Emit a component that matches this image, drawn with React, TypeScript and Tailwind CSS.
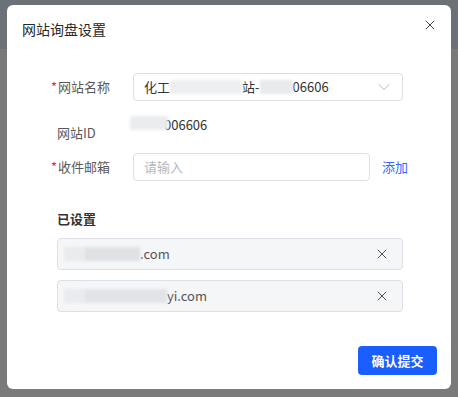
import { ChevronDown, X } from "lucide-react";

const font = { fontFamily: '"Noto Sans CJK SC", "Noto Sans", sans-serif' };

function Blur({ w, tone = "bg-[#e6e8eb]" }: { w: string; tone?: string }) {
  return <span className={`inline-block h-[14px] ${w} ${tone} blur-[1.5px]`} />;
}

function Label({ text, required }: { text: string; required?: boolean }) {
  return (
    <div className="w-[76px] shrink-0 text-[13px] text-[#595959]">
      {required && <span className="-ml-[6px] mr-px text-[#f5222d]">*</span>}
      {text}
    </div>
  );
}

function App() {
  return (
    <div style={font} className="relative h-[397px] w-[458px] overflow-hidden bg-[#7a7a7a]">
      <div className="h-[49px] bg-[#6c7178]" />
      <div className="absolute left-[7px] top-[5px] flex h-[384px] w-[444px] flex-col rounded-[6px] bg-white">
        {/* header */}
        <div className="flex h-[44px] items-center justify-between pl-[15px] pr-[13px] pt-[4px]">
          <span className="text-[14px] text-[#262626]">网站询盘设置</span>
          <X size={16} strokeWidth={1.4} className="-mt-[8px] text-[#333]" />
        </div>

        <div className="flex flex-col pl-[50px] pr-[48px] pt-[24px]">
          {/* 网站名称 */}
          <div className="flex items-center">
            <Label text="网站名称" required />
            <div className="flex h-[28px] flex-1 items-center justify-between rounded-[4px] border border-[#dcdfe6] pl-[10px] pr-[8px] text-[13px] text-[#333]">
              <span className="flex items-center">
                化工
                <Blur w="w-[72px]" tone="bg-[#eceef0]" />
                站-
                <Blur w="w-[33px]" tone="bg-[#e9eaed]" />
                06606
              </span>
              <ChevronDown size={20} strokeWidth={1} className="text-[#a8abb2]" />
            </div>
          </div>

          {/* 网站ID */}
          <div className="mt-[14px] flex items-start">
            <div className="pt-[8px]">
              <Label text="网站ID" />
            </div>
            <div className="flex items-center text-[13px] text-[#333]">
              <span className="relative z-10 -ml-[3px]">
                <Blur w="w-[38px]" tone="bg-[#ebecee]" />
              </span>
              <span className="-ml-[4px]">006606</span>
            </div>
          </div>

          {/* 收件邮箱 */}
          <div className="mt-[10px] flex items-center whitespace-nowrap">
            <Label text="收件邮箱" required />
            <div className="flex h-[28px] w-[237px] shrink-0 items-center rounded-[4px] border border-[#dcdfe6] pl-[10px] text-[13px] text-[#b4b7bd]">
              请输入
            </div>
            <span className="ml-[12px] shrink-0 text-[13px] text-[#2f6bff]">添加</span>
          </div>

          {/* 已设置 */}
          <div className="mt-[28px] text-[13px] font-bold text-[#333]">已设置</div>
          <div className="mt-[10px] flex flex-col gap-[10px]">
            <div className="flex h-[32px] items-center justify-between rounded-[4px] border border-[#dcdfe6] bg-[#f5f6f8] pl-[6px] pr-[12px] text-[13px] text-[#555]">
              <span className="flex items-center">
                <Blur w="w-[20px]" tone="bg-[#eaebee]" />
                <Blur w="w-[56px]" tone="bg-[#dfe1e5]" />
                .com
              </span>
              <X size={16} strokeWidth={1.4} className="text-[#444]" />
            </div>
            <div className="flex h-[32px] items-center justify-between rounded-[4px] border border-[#dcdfe6] bg-[#f5f6f8] pl-[6px] pr-[12px] text-[13px] text-[#555]">
              <span className="flex items-center">
                <Blur w="w-[20px]" tone="bg-[#eaebee]" />
                <Blur w="w-[83px]" tone="bg-[#e1e3e6]" />
                yi.com
              </span>
              <X size={16} strokeWidth={1.4} className="text-[#444]" />
            </div>
          </div>
        </div>

        {/* footer */}
        <div className="mt-auto flex justify-end pb-[14px] pr-[14px]">
          <button className="h-[29px] w-[79px] rounded-[4px] bg-[#1a5eff] text-[13px] font-bold text-white">
            确认提交
          </button>
        </div>
      </div>
    </div>
  );
}

export default App;
